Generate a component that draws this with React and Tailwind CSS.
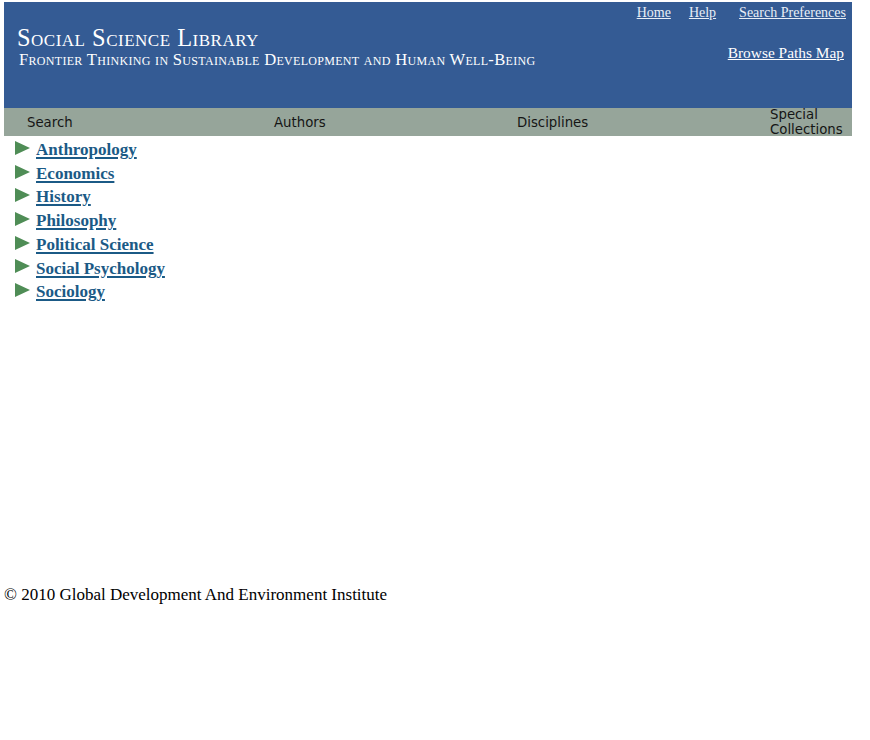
export default function App() {
  const items = [
    "Anthropology",
    "Economics",
    "History",
    "Philosophy",
    "Political Science",
    "Social Psychology",
    "Sociology",
  ];
  return (
    <div className="p-[4px] pt-[2px] font-['Liberation_Serif',serif] text-black bg-white min-h-[740px]">
      <div className="w-[848px]">
        <div className="h-[106px] bg-[#345b94] flex justify-between">
          <div className="pl-[13px] pt-[23px] text-white [font-variant:small-caps]">
            <div className="text-[24.4px] leading-[26px] tracking-[0.5px]">Social Science Library</div>
            <div className="text-[16.6px] leading-[18px] pl-[2px] tracking-[0.3px]">
              Frontier Thinking in Sustainable Development and Human Well-Being
            </div>
          </div>
          <div className="flex flex-col items-end pr-[6px] pt-[2px] text-[#e8eef6]">
            <div className="flex gap-[18px] text-[14px] leading-[18px]">
              <a className="underline" href="#">Home</a>
              <a className="underline" href="#">Help</a>
              <a className="underline ml-[5px]" href="#">Search Preferences</a>
            </div>
            <a className="underline text-[15.4px] leading-[20px] mt-[21px] mr-[2px] text-white" href="#">Browse Paths Map</a>
          </div>
        </div>
        <div className="h-[28px] bg-[#96a59a] flex font-['DejaVu_Sans',sans-serif] text-[13.3px] text-[#151515]">
          <div className="w-[212px] pl-[23px] pt-[5px]">Search</div>
          <div className="w-[212px] pl-[58px] pt-[5px]">Authors</div>
          <div className="w-[212px] pl-[89px] pt-[5px]">Disciplines</div>
          <div className="w-[212px] pl-[130px] leading-[15px] -mt-[1px] -mr-[4px] overflow-visible whitespace-nowrap">
            Special<br />Collections
          </div>
        </div>
      </div>
      <ul className="pt-[2px] pl-[11px]">
        {items.map((t) => (
          <li key={t} className="flex items-center h-[23.7px]">
            <svg width="15" height="14" viewBox="0 0 15 14" className="mr-[6px] -mt-[4px]">
              <polygon points="0,0 15,7 0,14" fill="#4f8d56" />
            </svg>
            <a href="#" className="font-bold text-[17px] text-[#1b5a86] underline decoration-[2px] underline-offset-[2px]">
              {t}
            </a>
          </li>
        ))}
      </ul>
      <div className="mt-[278px] text-[17px]">© 2010 Global Development And Environment Institute</div>
    </div>
  );
}
